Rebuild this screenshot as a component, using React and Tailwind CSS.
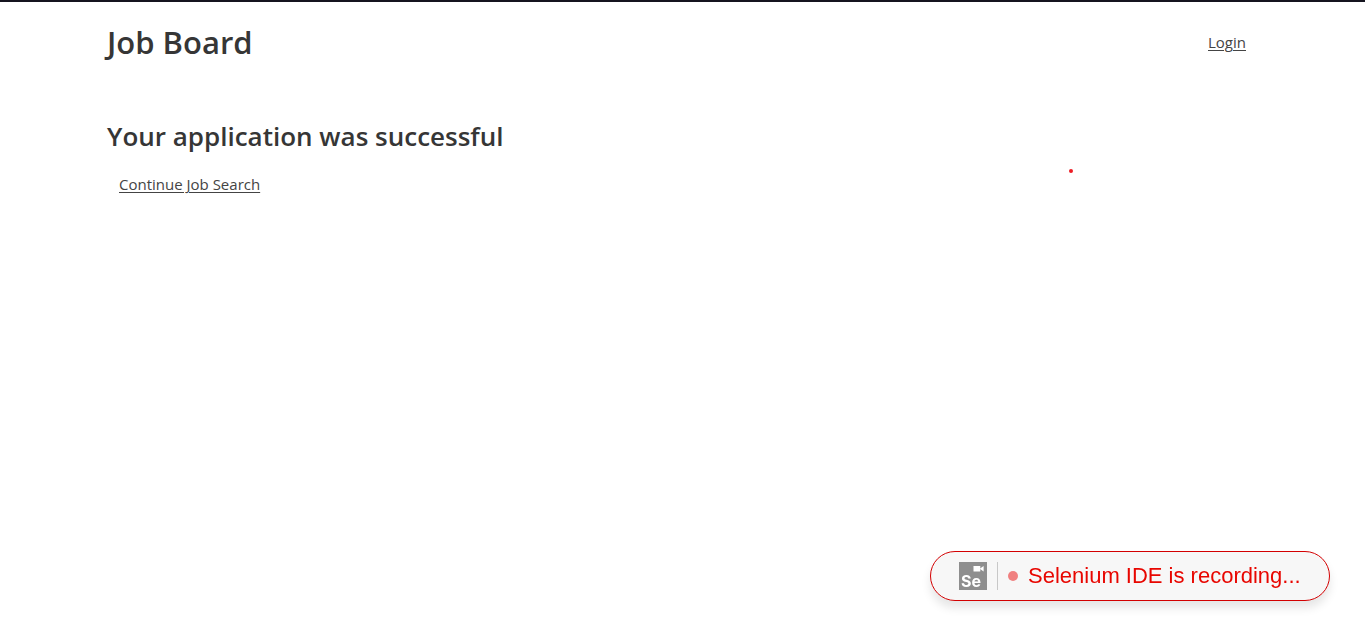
function SeleniumIcon() {
  return (
    <svg viewBox="0 0 28 28" className="h-7 w-7 shrink-0 overflow-visible" aria-hidden="true">
      <rect width="28" height="28" fill="#8e8e8e" />
      <rect x="14.5" y="4" width="6.8" height="5.6" rx="0.4" fill="#fff" />
      <path d="M20.8 6.8 24.6 4v5.6z" fill="#fff" />
      <text x="2" y="24.8" fill="#fff" fontFamily="Inter, sans-serif" fontSize="16" fontWeight="700">
        Se
      </text>
    </svg>
  );
}

function Header() {
  return (
    <header className="flex items-center justify-between pt-5">
      <h1 className="text-[31px] leading-10 font-semibold">Job Board</h1>
      <nav className="px-3">
        <a href="#login" className="text-[15px] leading-6 text-[#444] underline underline-offset-2">
          Login
        </a>
      </nav>
    </header>
  );
}

function RecordingNotice() {
  return (
    <aside
      role="status"
      className="fixed right-[35px] bottom-9 flex h-[50px] w-[400px] items-center rounded-full border border-[#d30001] bg-[#f7f7f7] pl-7 font-['Liberation_Sans',Arial,sans-serif] shadow-[0_7px_10px_0_rgba(0,0,0,0.1)]"
    >
      <SeleniumIcon />
      <span className="ml-2.5 h-7 w-px bg-[#c8c8c8]" />
      <span className="ml-2.5 size-2.5 rounded-full bg-[#f08080]" />
      <span className="ml-2.5 text-[22px] leading-7 whitespace-nowrap text-[#e80600]">
        Selenium IDE is recording...
      </span>
    </aside>
  );
}

export default function App() {
  return (
    <div className="min-h-screen border-t-2 border-[#15141f] bg-white font-['Open_Sans','Noto_Sans',sans-serif] text-[#363636]">
      <div className="mx-auto max-w-[1151px]">
        <Header />
        <main className="pt-[54px]">
          <h2 className="text-[26px] leading-10 font-semibold">Your application was successful</h2>
          <p className="px-3 pt-4">
            <a href="#jobs" className="text-[15px] leading-6 text-[#444] underline underline-offset-2">
              Continue Job Search
            </a>
          </p>
        </main>
      </div>
      <span className="absolute top-[169px] left-[1069px] size-1 rounded-full bg-[#ed1c24]" />
      <RecordingNotice />
    </div>
  );
}
